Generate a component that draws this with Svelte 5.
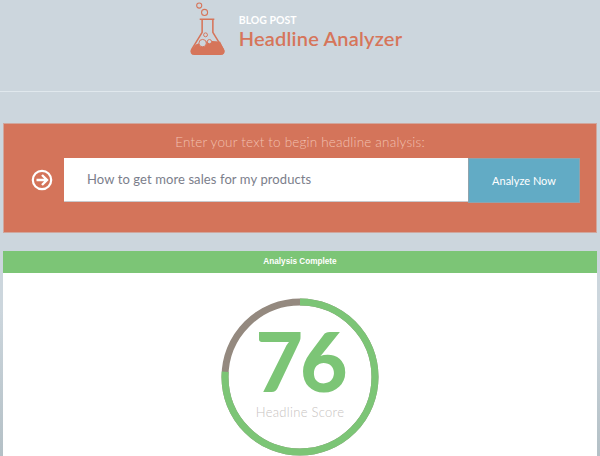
<script lang="ts">
  let headline = 'How to get more sales for my products';
  const score = 76;
  const radius = 75;
  const circumference = 2 * Math.PI * radius;
  const scoreLength = (score / 100) * circumference;
</script>

<div class="page">
  <header class="site-header">
    <div class="logo">
      <svg class="flask" viewBox="0 0 40 56" aria-hidden="true">
        <circle cx="11.5" cy="4.5" r="2.6" fill="none" stroke="#d6755a" stroke-width="1.1" />
        <circle cx="17" cy="11.5" r="3.1" fill="none" stroke="#d6755a" stroke-width="1.1" />
        <path d="M12 18.5h15M14.5 19v13L3.8 49.5c-1.4 2.6 0 5 2.8 5h26.8c2.8 0 4.2-2.4 2.8-5L25.500 32V19" fill="none" stroke="#d6755a" stroke-width="1.6" stroke-linejoin="round" />
        <path d="M8 44.500c7-3.500 16-4.500 25-3l4 8.200c1.200 2.400 0 4.800-3 4.800H6c-2.800 0-3.800-2.500-2.600-4.600z" fill="#d6755a" />
        <circle cx="18" cy="34.500" r="2" fill="none" stroke="#d6755a" stroke-width="1" />
        <circle cx="15" cy="43" r="3.800" fill="#ccd6dd" stroke="#d6755a" stroke-width="1" />
        <circle cx="22" cy="41.500" r="2.200" fill="#ccd6dd" stroke="#d6755a" stroke-width="1" />
      </svg>
      <div class="logo-text">
        <span class="eyebrow">BLOG POST</span>
        <span class="title">Headline Analyzer</span>
      </div>
    </div>
  </header>

  <section class="form-panel">
    <p class="prompt">Enter your text to begin headline analysis:</p>
    <div class="form-row">
      <svg class="arrow" viewBox="0 0 22 22" aria-hidden="true">
        <circle cx="11" cy="11" r="9.200" fill="none" stroke="#fff" stroke-width="2.200" />
        <path d="M5.500 11h10M11 6l5 5-5 5" fill="none" stroke="#fff" stroke-width="2.400" />
      </svg>
      <input class="headline-input" type="text" value={headline} aria-label="Headline" />
      <button class="analyze">Analyze Now</button>
    </div>
  </section>

  <section class="results">
    <div class="status">Analysis Complete</div>
    <div class="score-body">
      <div class="score-ring">
        <svg viewBox="0 0 158 158" aria-hidden="true">
          <circle cx="79" cy="79" r={radius} fill="none" stroke="#94897f" stroke-width="7" />
          <circle
            cx="79"
            cy="79"
            r={radius}
            fill="none"
            stroke="#7cc576"
            stroke-width="7"
            stroke-dasharray="{scoreLength} {circumference}"
            transform="rotate(-90 79 79)"
          />
        </svg>
        <div class="score-text">
          <span class="score-value">{score}</span>
          <span class="score-label">Headline Score</span>
        </div>
      </div>
    </div>
  </section>
</div>

<style>
  :global(body) {
    margin: 0;
    background: #ccd6dd;
  }

  .page {
    width: 600px;
    height: 456px;
    overflow: hidden;
    padding: 0 3px;
    box-sizing: border-box;
    background: linear-gradient(180deg, #ccd6dd 0%, #ccd6dd 68%, #b4c0c6 100%);
    font-family: Lato, "Open Sans", sans-serif;
  }

  .site-header {
    height: 91px;
    margin: 0 -3px 31px;
    border-bottom: 1px solid #e0e8ed;
    display: flex;
    justify-content: center;
    background: #ccd6dd;
  }

  .logo {
    display: flex;
    align-items: flex-start;
    gap: 12px;
    margin-left: -10px;
    padding-top: 1px;
  }

  .flask {
    width: 39px;
    height: 55px;
  }

  .logo-text {
    display: flex;
    flex-direction: column;
    padding-top: 14px;
  }

  .eyebrow {
    color: #fff;
    font-size: 10.500px;
    font-weight: 700;
    line-height: 11px;
  }

  .title {
    color: #d6755a;
    font-size: 20px;
    font-weight: 600;
    line-height: 24px;
    letter-spacing: 0.2px;
  }

  .form-panel {
    height: 110px;
    box-sizing: border-box;
    background: #d4745a;
    border: 1px solid #d0a79d;
    margin-bottom: 18px;
    padding-top: 10px;
  }

  .prompt {
    margin: 0 0 8px;
    text-align: center;
    color: #f2c0b0;
    font-size: 13.500px;
    font-weight: 300;
    line-height: 16px;
    letter-spacing: 0.18px;
  }

  .form-row {
    display: flex;
    align-items: flex-start;
    padding-left: 27px;
  }

  .arrow {
    width: 22px;
    height: 22px;
    margin: 11px 11px 0 0;
  }

  .headline-input {
    width: 404px;
    height: 44px;
    box-sizing: border-box;
    border: 0;
    border-bottom: 1px solid #c9c9cd;
    padding: 0 23px 1px;
    background: #fff;
    color: #7b7e8b;
    font-family: inherit;
    font-size: 13px;
    letter-spacing: 0.1px;
  }

  .analyze {
    width: 112px;
    height: 45px;
    border: 1px solid #8fa3ad;
    background: #62abc5;
    color: #fff;
    font-family: inherit;
    font-size: 11px;
    padding: 0;
  }

  .results {
    background: #fff;
    height: 205px;
  }

  .status {
    height: 22px;
    background: #7cc576;
    color: #fff;
    text-align: center;
    font-family: "Liberation Sans", Arial, sans-serif;
    font-size: 8.200px;
    font-weight: 700;
    line-height: 22px;
  }

  .score-body {
    display: flex;
    justify-content: center;
    padding-top: 25px;
  }

  .score-ring {
    position: relative;
    width: 158px;
    height: 158px;
  }

  .score-ring svg {
    display: block;
    width: 158px;
    height: 158px;
  }

  .score-text {
    position: absolute;
    inset: 0;
    display: flex;
    flex-direction: column;
    align-items: center;
  }

  .score-value {
    color: #7cc576;
    font-size: 82px;
    font-weight: 900;
    line-height: 66px;
    margin-top: 29px;
    letter-spacing: -3px;
  }

  .score-label {
    color: #c8c3bf;
    font-size: 13px;
    font-weight: 300;
    line-height: 16px;
    margin-top: 11px;
    letter-spacing: 0.3px;
  }
</style>
